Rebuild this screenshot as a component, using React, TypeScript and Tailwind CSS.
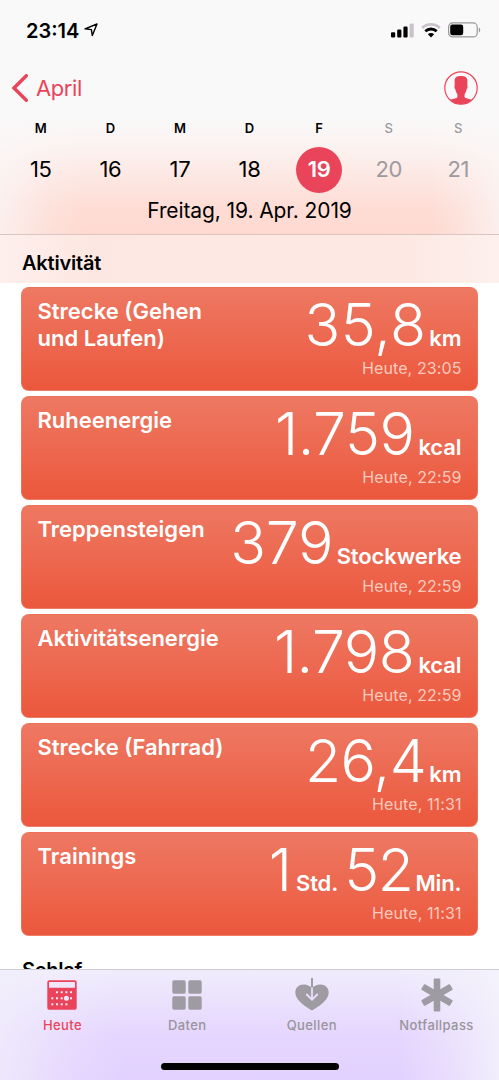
import type { ReactNode } from 'react'

interface Day {
    letter: string
    date: number
    weekend?: boolean
    selected?: boolean
}

interface Entry {
    title: string
    values: { amount: string; unit: string; className: string }[]
    time: string
}

const days: Day[] = [
    { letter: 'M', date: 15 },
    { letter: 'D', date: 16 },
    { letter: 'M', date: 17 },
    { letter: 'D', date: 18 },
    { letter: 'F', date: 19, selected: true },
    { letter: 'S', date: 20, weekend: true },
    { letter: 'S', date: 21, weekend: true },
]

const entries: Entry[] = [
    {
        title: 'Strecke (Gehen und Laufen)',
        values: [{ amount: '35,8', unit: 'km', className: 'tracking-[0.3px] mr-[3px]' }],
        time: 'Heute, 23:05',
    },
    {
        title: 'Ruheenergie',
        values: [{ amount: '1.759', unit: 'kcal', className: 'tracking-[-0.5px] mr-[4px]' }],
        time: 'Heute, 22:59',
    },
    {
        title: 'Treppensteigen',
        values: [{ amount: '379', unit: 'Stockwerke', className: 'tracking-[-0.3px] mr-[3.5px]' }],
        time: 'Heute, 22:59',
    },
    {
        title: 'Aktivitätsenergie',
        values: [{ amount: '1.798', unit: 'kcal', className: 'tracking-[-0.5px] mr-[4px]' }],
        time: 'Heute, 22:59',
    },
    {
        title: 'Strecke (Fahrrad)',
        values: [{ amount: '26,4', unit: 'km', className: 'tracking-[-0.5px] mr-[3px]' }],
        time: 'Heute, 11:31',
    },
    {
        title: 'Trainings',
        values: [
            { amount: '1', unit: 'Std.', className: 'mr-[4px]' },
            { amount: '52', unit: 'Min.', className: 'tracking-[-1.5px] ml-[6px] mr-[3px]' },
        ],
        time: 'Heute, 11:31',
    },
]

const StatusBar = () => (
    <div className="flex h-[60px] items-center justify-between pl-[26px] pr-[18px]">
        <div className="flex items-center text-black">
            <span className="mt-[2px] text-[20px] leading-6 font-semibold">23:14</span>
            <svg className="ml-[5px] h-[14px] w-[14px]" viewBox="0 0 14 14">
                <path d="M13 1 8.3 12.6 7.4 6.6 1 5.8Z" fill="none" stroke="black" strokeWidth="1.4" strokeLinejoin="round" />
            </svg>
        </div>
        <div className="flex items-center">
            <svg className="h-[15px] w-[23px]" viewBox="0 0 23 15">
                <rect x="0" y="9.2" width="4.2" height="5.4" rx="1.1" />
                <rect x="6.2" y="6.6" width="4.2" height="8" rx="1.1" />
                <rect x="12.4" y="3.6" width="4.2" height="11" rx="1.1" />
                <rect x="18.6" y="0.4" width="4.2" height="14.2" rx="1.1" fill="#cbc3cc" />
            </svg>
            <svg className="ml-[7px] h-[15px] w-[20px]" viewBox="0 0 20 15">
                <path d="M1.2 5A12.6 12.6 0 0 1 18.8 5" fill="none" stroke="#cbc3cc" strokeWidth="2.8" />
                <path d="M4.3 8.3A8.2 8.2 0 0 1 15.7 8.3" fill="none" stroke="black" strokeWidth="2.8" />
                <path d="M10 14.4 6.9 11.3A4.4 4.4 0 0 1 13.1 11.3Z" />
            </svg>
            <svg className="ml-[7px] h-[16px] w-[33px]" viewBox="0 0 33 16">
                <rect x="0.6" y="0.9" width="28.6" height="14" rx="4" fill="none" stroke="#99979b" strokeWidth="1.2" />
                <rect x="2.2" y="2.6" width="13" height="10.6" rx="2.2" />
                <path d="M30.8 5.4C32.7 6.2 32.7 9.6 30.8 10.4Z" fill="#99979b" />
            </svg>
        </div>
    </div>
)

const NavBar = () => (
    <div className="flex h-[56px] items-center justify-between pl-3 pr-[21px] text-[#ea445a]">
        <div className="flex items-center">
            <svg className="h-7 w-4" viewBox="0 0 16 28">
                <path d="M14.3 1.7 2 14 14.3 26.3" fill="none" stroke="currentColor" strokeWidth="3.4" strokeLinecap="round" />
            </svg>
            <span className="ml-[8px] text-[22px] leading-7 tracking-[-0.4px]">April</span>
        </div>
        <svg className="h-[34px] w-[34px]" viewBox="0 0 34 34">
            <circle cx="17" cy="17" r="16.2" fill="none" stroke="currentColor" strokeWidth="1.2" />
            <path
                d="M17 4.9C13 4.9 10.7 6.2 10.6 9.5L10.7 14.4C10 14.9 10.5 17.6 11.3 18C11.6 20.2 12.3 21.7 13.4 23.2V26.3C12.6 27.6 9.8 27.6 6.4 28.8C12 34.6 22 34.6 27.6 28.8C24.2 27.6 21.4 27.6 20.6 26.3V23.2C21.7 21.7 22.4 20.2 22.7 18C23.5 17.6 24 14.9 23.3 14.4L23.4 9.5C23.3 6.2 21 4.9 17 4.9Z"
                fill="currentColor"
            />
        </svg>
    </div>
)

const WeekStrip = () => (
    <div className="grid grid-cols-7 px-[6px]">
        {days.map(day => (
            <div key={day.date} className={`flex flex-col items-center ${day.weekend ? 'text-[#9d9a9f]' : 'text-black'}`}>
                <span className={`text-[13px] leading-6 ${day.weekend ? 'font-medium' : 'font-semibold'}`}>{day.letter}</span>
                <span
                    className={`mt-[7px] flex h-[46px] w-[46px] items-center justify-center rounded-full pb-[2px] text-[22px] tracking-[-0.4px] ${
                        day.selected ? 'bg-[#ea445a] font-semibold text-white' : ''
                    }`}
                >
                    {day.date}
                </span>
            </div>
        ))}
    </div>
)

const Card = ({ entry }: { entry: Entry }) => (
    <div className="flex h-[104px] shrink-0 justify-between rounded-[8px] border border-[#ef8069]/60 bg-linear-to-b from-[#ee7862] to-[#eb573c] px-[15.5px] text-white">
        <div className="mt-[10px] w-[190px] shrink-0 text-[22px] leading-[26.5px] font-semibold">{entry.title}</div>
        <div className="-ml-[60px] flex flex-col items-end whitespace-nowrap">
            <div className="-mt-[1px] flex h-[68px] items-baseline">
                {entry.values.map(value => (
                    <div key={value.unit} className="flex items-baseline">
                        <span className={`text-[59px] leading-[76px] font-light ${value.className}`}>{value.amount}</span>
                        <span className="text-[22px] font-semibold tracking-[-0.1px]">{value.unit}</span>
                    </div>
                ))}
            </div>
            <span className="mt-[1px] text-[16px] leading-6 tracking-[0.1px] text-[#fbcabd]">{entry.time}</span>
        </div>
    </div>
)

const CalendarIcon = () => (
    <svg className="h-[34px] w-[34px]" viewBox="0 0 34 34">
        <rect x="2.3" y="2.3" width="29.4" height="29.4" rx="1.8" fill="#ea445a" />
        <rect x="4" y="4" width="26" height="5.7" rx="0.5" fill="#f0e8fa" />
        <g fill="#f0e8fa">
            {[12, 16.7, 21.4, 26].map(x => (
                <rect key={x} x={x - 1} y="13.2" width="2" height="2" />
            ))}
            {[7.3, 12, 16.7, 26].map(x => (
                <rect key={x} x={x - 1} y="19.3" width="2" height="2" />
            ))}
            {[7.3, 12, 16.7, 21.4].map(x => (
                <rect key={x} x={x - 1} y="25.3" width="2" height="2" />
            ))}
            <circle cx="21.4" cy="20.3" r="2.5" />
        </g>
    </svg>
)

const GridIcon = () => (
    <svg className="h-[34px] w-[34px]" viewBox="0 0 34 34" fill="#9f9ba3">
        <rect x="2.3" y="2.3" width="13.4" height="13.4" rx="1.6" />
        <rect x="18.3" y="2.3" width="13.4" height="13.4" rx="1.6" />
        <rect x="2.3" y="18.3" width="13.4" height="13.4" rx="1.6" />
        <rect x="18.3" y="18.3" width="13.4" height="13.4" rx="1.6" />
    </svg>
)

const HeartIcon = () => (
    <svg className="h-[34px] w-[34px]" viewBox="0 -1 34 34" fill="none">
        <path
            d="M17 31.5C12 28.5 0.3 21.8 0.3 13.5C0.3 8.5 4 5.5 8.5 5.5C12.5 5.5 15.5 7.3 17 9.3C18.5 7.3 21.5 5.5 25.5 5.5C30 5.5 33.7 8.5 33.7 13.5C33.7 21.8 22 28.5 17 31.5Z"
            fill="#9f9ba3"
        />
        <path d="M17 8V20.5M11.3 15 17 20.7 22.7 15" stroke="#eadffc" strokeWidth="1.8" />
        <path d="M17 -1V8.5" stroke="#9f9ba3" strokeWidth="2" />
    </svg>
)

const AsteriskIcon = () => (
    <svg className="h-[34px] w-[34px]" viewBox="0 0 34 34" fill="#9f9ba3">
        <rect x="13.7" y="0.4" width="6.6" height="33.2" rx="1" />
        <rect x="13.7" y="0.4" width="6.6" height="33.2" rx="1" transform="rotate(60 17 17)" />
        <rect x="13.7" y="0.4" width="6.6" height="33.2" rx="1" transform="rotate(-60 17 17)" />
    </svg>
)

const Tab = ({ label, active, children }: { label: string; active?: boolean; children: ReactNode }) => (
    <div className={`flex w-[124.7px] flex-col items-center ${active ? 'text-[#ea445a]' : 'text-[#98949a]'}`}>
        {children}
        <span className="mt-[3px] text-[13px] leading-5 font-medium tracking-[0.4px]">{label}</span>
    </div>
)

const App = () => {
    return (
        <div className="flex h-[1080px] w-[499px] flex-col overflow-hidden bg-white font-['Inter','Liberation_Sans',sans-serif]">
            <header className="h-[235px] shrink-0 border-b border-[#d9c6c2] bg-[linear-gradient(90deg,#faf8f8b0_0%,#faf8f880_4%,#faf8f830_10%,#faf8f800_17%,#faf8f800_86%,#faf8f840_92%,#faf8f8b0_100%),linear-gradient(180deg,#f9f9f9_0%,#f9f9f9_50%,#fbf3f1_62%,#fde7e2_76%,#feddd6_88%,#fed9d0_100%)]">
                <StatusBar />
                <NavBar />
                <WeekStrip />
                <div className="text-center text-[21px] leading-9 tracking-[-0.1px] text-black">Freitag, 19. Apr. 2019</div>
            </header>
            <main className="flex min-h-0 flex-1 flex-col overflow-hidden">
                <h2 className="flex h-[48px] shrink-0 items-center bg-[linear-gradient(90deg,#feefec_0%,#fde7e2_18%,#fde8e3_80%,#fdf0ed_100%)] pt-[8px] pl-[22px] text-[20px] font-semibold tracking-[-0.2px] text-black">
                    Aktivität
                </h2>
                <div className="flex flex-col gap-[5px] px-[21px] pt-[4px]">
                    {entries.map(entry => (
                        <Card key={entry.title} entry={entry} />
                    ))}
                </div>
                <h2 className="mt-[20px] shrink-0 pl-[22px] text-[20px] leading-7 font-semibold tracking-[-0.2px] text-black">Schlaf</h2>
            </main>
            <nav className="flex h-[111px] shrink-0 flex-col items-center border-t border-[#cfcbd5] bg-[linear-gradient(90deg,#f3f1fbb0_0%,#f3f1fb80_6%,#f3f1fb30_15%,#f3f1fb00_24%,#f3f1fb00_80%,#f5f4fb70_92%,#f5f4fbd0_100%),linear-gradient(180deg,#f0ecfc_0%,#eae1fd_30%,#e5d6fe_60%,#e2d1ff_100%)]">
                <div className="flex h-[93px] pt-[8px]">
                    <Tab label="Heute" active>
                        <CalendarIcon />
                    </Tab>
                    <Tab label="Daten">
                        <GridIcon />
                    </Tab>
                    <Tab label="Quellen">
                        <HeartIcon />
                    </Tab>
                    <Tab label="Notfallpass">
                        <AsteriskIcon />
                    </Tab>
                </div>
                <div className="h-[6.5px] w-[178px] rounded-full bg-black" />
            </nav>
        </div>
    )
}

export default App
